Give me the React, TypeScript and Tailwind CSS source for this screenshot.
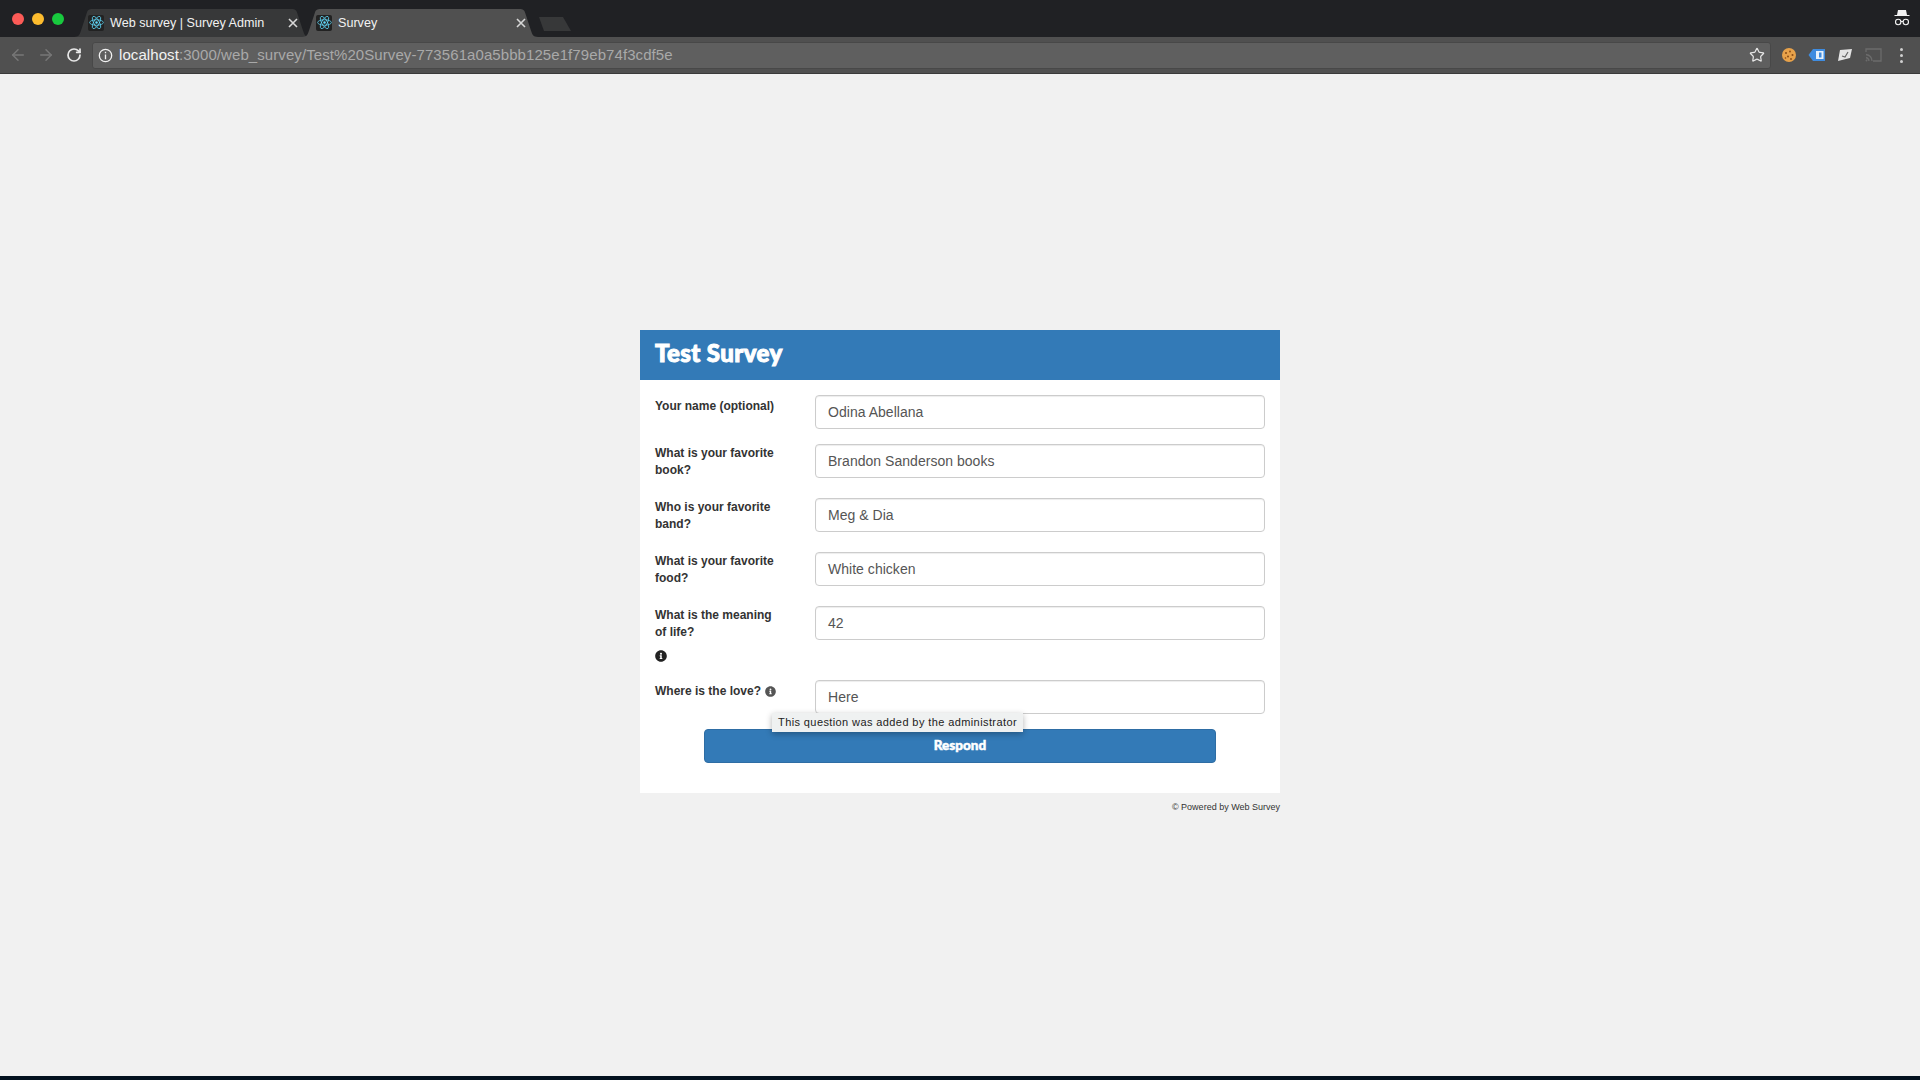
import React from "react";
import { ArrowLeft, ArrowRight, RotateCw, Star } from "lucide-react";
import { FaInfoCircle } from "react-icons/fa";

const sans = "[font-family:'Liberation_Sans',Arial,sans-serif]";

function ReactIcon() {
  return (
    <span className="flex h-[16px] w-[16px] shrink-0 items-center justify-center rounded-[2px] bg-[#222222]">
      <svg width="15" height="15" viewBox="-12 -12 24 24" fill="none" stroke="#61dafb" strokeWidth="1.2">
        <circle r="2" fill="#61dafb" stroke="none" />
        <ellipse rx="11" ry="4.4" />
        <ellipse rx="11" ry="4.4" transform="rotate(60)" />
        <ellipse rx="11" ry="4.4" transform="rotate(120)" />
      </svg>
    </span>
  );
}

function Tab({ title, active, width, className }: { title: string; active?: boolean; width: string; className?: string }) {
  return (
    <div className={`relative flex h-[28px] items-center ${width} ${className ?? ""}`}>
      <svg className="absolute inset-0 h-full w-full" viewBox="0 0 240 28" preserveAspectRatio="none">
        <path d="M0 28 C5 28 6 25 7 22 L13 4 C14 1 15 0 19 0 L221 0 C225 0 226 1 227 4 L233 22 C234 25 235 28 240 28 Z" fill={active ? "#505050" : "#373839"} />
      </svg>
      <div className="relative flex w-full items-center pl-[14px] pr-[12px]">
        <ReactIcon />
        <span className={`ml-[6px] text-[12.6px] text-[#f2f2f2] ${sans}`}>{title}</span>
        <svg className="ml-auto" width="10" height="10" viewBox="0 0 10 10" stroke="#d8d8d8" strokeWidth="1.6">
          <path d="M1 1 L9 9 M9 1 L1 9" />
        </svg>
      </div>
    </div>
  );
}

function Incognito() {
  return (
    <svg width="18" height="18" viewBox="0 0 18 18" fill="none" stroke="#f2f2f2">
      <path d="M5 1 H13 L14 6 H16.5 V7 H1.5 V6 H4 Z" fill="#f2f2f2" stroke="none" />
      <circle cx="5.2" cy="13" r="2.7" strokeWidth="1.1" />
      <circle cx="12.8" cy="13" r="2.7" strokeWidth="1.1" />
      <path d="M7.9 12.5 H10.1" strokeWidth="1.1" />
    </svg>
  );
}

function Extensions() {
  return (
    <div className="ml-[9px] flex items-center">
      <svg width="16" height="16" viewBox="0 0 16 16" className="ml-[1px]">
        <circle cx="8" cy="8" r="7" fill="#e8a24a" />
        <g fill="#8a4b16">
          <circle cx="5" cy="6" r="1" />
          <circle cx="9" cy="4.5" r="0.9" />
          <circle cx="11.5" cy="8" r="1" />
          <circle cx="7" cy="9.5" r="1" />
          <circle cx="10" cy="12" r="0.9" />
          <circle cx="4.5" cy="11" r="0.8" />
        </g>
      </svg>
      <svg width="18" height="14" viewBox="0 0 18 14" className="ml-[11px]">
        <path d="M5 1 H17 V13 H5 L0.5 7 Z" fill="#3f8ce0" />
        <rect x="8" y="3" width="7.5" height="8" fill="#e6f1fc" />
        <rect x="11" y="4.5" width="2.5" height="5" fill="#3f8ce0" />
      </svg>
      <svg width="16" height="14" viewBox="0 0 16 14" className="ml-[11px]">
        <path d="M3 2 L15 1 L13 10 L1 13 Z" fill="#e4e4e4" />
        <path d="M5 8 L8 9 L11 4" stroke="#666666" strokeWidth="1.2" fill="none" />
      </svg>
      <svg width="17" height="14" viewBox="0 0 17 14" fill="none" stroke="#6b6b6b" strokeWidth="1.3" className="ml-[12px]">
        <path d="M1 4 V1 H16 V13 H8" />
        <path d="M1 6.5 A7 7 0 0 1 7 13 M1 9.5 A4 4 0 0 1 4 13" />
        <circle cx="1.5" cy="12.5" r="1" fill="#6b6b6b" stroke="none" />
      </svg>
      <div className="ml-[18px] flex flex-col gap-[3px]">
        <span className="h-[3px] w-[3px] rounded-full bg-[#d0d0d0]" />
        <span className="h-[3px] w-[3px] rounded-full bg-[#d0d0d0]" />
        <span className="h-[3px] w-[3px] rounded-full bg-[#d0d0d0]" />
      </div>
    </div>
  );
}

function Field({ label, value, className, labelClass, children }: { label: string; value: string; className: string; labelClass?: string; children?: React.ReactNode }) {
  return (
    <div className={`flex ${className}`}>
      <div className={`w-[175px] shrink-0 pl-[15px] pr-[30px] text-[12px] leading-[17px] font-bold text-[#333333] ${labelClass ?? ""}`}>
        {label}
        {children}
      </div>
      <div className="flex h-[34px] w-[450px] items-center rounded-[4px] border border-[#cccccc] bg-white pl-[12px] text-[14px] tracking-[0.03px] text-[#555555] shadow-[inset_0_1px_1px_rgba(0,0,0,0.075)]">
        {value}
      </div>
    </div>
  );
}

export default function App() {
  return (
    <div className={`flex h-[1080px] w-[1920px] flex-col overflow-hidden bg-[#f1f1f1] ${sans}`}>
      <div className="flex h-[37px] shrink-0 items-end bg-[#202124]">
        <div className="flex h-full w-[74px] items-center gap-[8px] pl-[12px]">
          <span className="h-[12px] w-[12px] shrink-0 rounded-full bg-[#fc5b57]" />
          <span className="h-[12px] w-[12px] shrink-0 rounded-full bg-[#fdbc2e]" />
          <span className="h-[12px] w-[12px] shrink-0 rounded-full bg-[#18c93e]" />
        </div>
        <Tab title="Web survey | Survey Admin" width="w-[236px]" />
        <Tab title="Survey" active width="w-[236px]" className="-ml-[8px]" />
        <svg width="32" height="14" viewBox="0 0 32 14" className="mb-[6px] ml-[1px]">
          <path d="M0 0 H24 L32 14 H5 Z" fill="#373839" />
        </svg>
        <div className="ml-auto mr-[9px] self-start pt-[9px]">
          <Incognito />
        </div>
      </div>

      <div className="flex h-[37px] shrink-0 items-center border-b border-[#3a3a3a] bg-[#505050]">
        <ArrowLeft size={18} strokeWidth={2} color="#777777" className="ml-[9px]" />
        <ArrowRight size={18} strokeWidth={2} color="#777777" className="ml-[10px]" />
        <RotateCw size={16} strokeWidth={2.6} color="#e8e8e8" className="ml-[11px]" />
        <div className="ml-[10px] flex h-[27px] w-[1679px] items-center rounded-[3px] border border-[#484848] bg-[#5f5f5f] pl-[5px] pr-[5px]">
          <svg width="15" height="15" viewBox="0 0 16 16" fill="none" stroke="#f2f2f2" strokeWidth="1.4" className="shrink-0">
            <circle cx="8" cy="8" r="6.6" />
            <path d="M8 7 V12 M8 4 V5.6" />
          </svg>
          <span className="ml-[6px] text-[15px] tracking-[0.08px] text-[#a9a9a9]">
            <span className="text-[#f2f2f2]">localhost</span>:3000/web_survey/Test%20Survey-773561a0a5bbb125e1f79eb74f3cdf5e
          </span>
          <Star size={16} strokeWidth={1.8} color="#e6e6e6" className="ml-auto" />
        </div>
        <Extensions />
      </div>

      <main className="flex flex-1 flex-col items-center pt-[256px]">
        <div className="w-[640px] bg-white">
          <div className="flex h-[50px] items-center bg-[#337ab7] pb-[4px] pl-[15px] text-[24px] font-black tracking-[0.4px] text-white [-webkit-text-stroke:1px_white] [font-family:Lato,sans-serif]">
            Test Survey
          </div>
          <div className="relative pb-[30px] pt-[15px]">
            <Field label="Your name (optional)" value="Odina Abellana" className="mb-[15px]" labelClass="pt-[3px]" />
            <Field label="What is your favorite book?" value="Brandon Sanderson books" className="mb-[19px]" labelClass="pt-[1px]" />
            <Field label="Who is your favorite band?" value="Meg & Dia" className="mb-[19px]" labelClass="pt-[1px]" />
            <Field label="What is your favorite food?" value="White chicken" className="mb-[19px]" labelClass="pt-[1px]" />
            <Field label="What is the meaning of life?" value="42" className="mb-[16px]" labelClass="pt-[1px]">
              <div className="mt-[9px] h-[14px] text-[#222222]">
                <FaInfoCircle size={12} />
              </div>
            </Field>
            <Field label="Where is the love?" value="Here" className="mb-[15px]" labelClass="whitespace-nowrap pt-[3px]">
              <FaInfoCircle size={11} className="ml-[4px] inline text-[#555555]" />
            </Field>
            <button className="mx-auto flex h-[34px] w-[512px] items-center justify-center rounded-[4px] border border-[#2e6da4] bg-[#337ab7] pb-[1px] text-[13.5px] font-black text-white [-webkit-text-stroke:0.5px_white] [font-family:Lato,sans-serif]">
              Respond
            </button>
            <div className="absolute left-[132px] top-[333px] flex h-[19px] w-[251px] items-center justify-center whitespace-nowrap bg-[#eff1f1] text-[11px] tracking-[0.4px] text-[#222222] shadow-[0_2px_6px_rgba(0,0,0,0.3)]">
              This question was added by the administrator
            </div>
          </div>
        </div>
        <div className="mt-[8px] w-[640px] text-right text-[9px] leading-[12px] text-[#333333]">© Powered by Web Survey</div>
      </main>

      <div className="h-[4px] shrink-0 bg-[#03111f]" />
    </div>
  );
}
